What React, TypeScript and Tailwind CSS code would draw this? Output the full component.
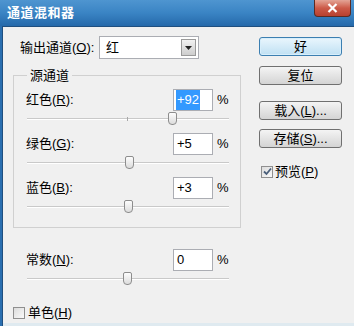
import React from "react";

const font = { fontFamily: '"Liberation Sans", "Noto Sans CJK SC", sans-serif' };

function Slider({ pos, tick }: { pos: number; tick?: boolean }) {
  return (
    <div className="relative h-[14px] ml-[13px] w-[202px]">
      <div className="absolute left-0 right-0 top-[6px] h-[2px] bg-[#c9c9c9] border-b border-white" />
      {tick && <div className="absolute left-[100px] top-[5px] h-[4px] w-px bg-[#a8a8a8]" />}
      <div
        className="absolute top-0 h-[13px] w-[9px] rounded-t-[2px] rounded-b-[4px] border border-[#8d8d8d] bg-gradient-to-b from-[#fdfdfd] to-[#dcdcdc]"
        style={{ left: pos - 4 }}
      />
    </div>
  );
}

function ValueRow({ label, value, selected }: { label: React.ReactNode; value: string; selected?: boolean }) {
  return (
    <div className="flex h-[22px] items-center">
      <div className="w-[159px] pl-[12px] text-[13px] text-black">{label}</div>
      <div className="flex h-[22px] w-[40px] items-center border border-[#abadb3] bg-white pl-[2px] text-[13px]">
        <span className={selected ? "bg-[#3399ff] px-px text-white" : "px-px text-black"}>{value}</span>
      </div>
      <span className="ml-[4px] text-[13px] text-black">%</span>
    </div>
  );
}

function Btn({ children, primary, className }: { children: React.ReactNode; primary?: boolean; className?: string }) {
  return (
    <div
      className={
        "flex h-[19px] w-[83px] items-center justify-center rounded-[3px] border text-[13px] text-black " +
        (primary
          ? "border-[#3c7fb1] bg-gradient-to-b from-[#eaf6fd] to-[#bfe0f3] shadow-[inset_0_0_0_1px_#d7eefb] "
          : "border-[#707070] bg-gradient-to-b from-[#f4f4f4] to-[#d4d4d4] ") +
        (className ?? "")
      }
    >
      {children}
    </div>
  );
}

function Box({ checked }: { checked?: boolean }) {
  return (
    <div className="flex h-[12px] w-[12px] items-center justify-center border border-[#8f8f8f] bg-gradient-to-br from-[#dcdcdc] to-[#fafafa]">
      {checked && (
        <svg width="9" height="9" viewBox="0 0 9 9">
          <path d="M1 4.5 L3.5 7 L8 1.5" stroke="#4a5f7a" strokeWidth="1.8" fill="none" />
        </svg>
      )}
    </div>
  );
}

export default function App() {
  return (
    <div className="flex h-[326px] w-[354px] flex-col overflow-hidden bg-[#2a6fb0]" style={font}>
      {/* Title bar */}
      <div className="relative flex h-[26px] shrink-0 items-center bg-gradient-to-b from-[#4e95d0] via-[#3a84c4] to-[#2569aa] pl-[7px]">
        <span className="text-[13px] font-bold tracking-[0.5px] text-white">通道混和器</span>
        <div className="absolute right-[3px] top-0 flex h-[17px] w-[37px] items-center justify-center rounded-b-[4px] border border-t-0 border-[#5c2a22] bg-gradient-to-b from-[#e3a496] via-[#cc5a48] to-[#b8402f]">
          <svg width="11" height="10" viewBox="0 0 11 10">
            <path d="M1.5 1 L9.5 9 M9.5 1 L1.5 9" stroke="white" strokeWidth="2.2" />
          </svg>
        </div>
      </div>

      {/* Body */}
      <div className="ml-[2px] flex flex-1 border-l border-t border-[#1f4f7f] bg-[#f0f0f0]">
        <div className="flex flex-1 flex-col">
          <div className="flex flex-1">
            {/* Left column */}
            <div className="flex w-[256px] flex-col">
              <div className="mt-[9px] flex h-[23px] items-center pl-[17px]">
                <span className="w-[79px] text-[13px] text-black">
                  输出通道(<u>O</u>):
                </span>
                <div className="flex h-[23px] w-[100px] items-center border border-[#abadb3] bg-white pl-[6px]">
                  <span className="flex-1 text-[13px] text-black">红</span>
                  <div className="mr-[2px] flex h-[17px] w-[15px] items-center justify-center border border-[#9a9a9a] bg-gradient-to-b from-[#f2f2f2] to-[#cdcdcd]">
                    <svg width="7" height="4" viewBox="0 0 7 4">
                      <path d="M0 0 H7 L3.5 4 Z" fill="#222" />
                    </svg>
                  </div>
                </div>
              </div>

              <div className="relative ml-[10px] mt-[16px] h-[153px] w-[228px] border border-[#d0d0d0] pt-[13px]">
                <span className="absolute -top-[10px] left-[13px] bg-[#f0f0f0] px-[3px] text-[13px] text-black">源通道</span>
                <ValueRow label={<>红色(<u>R</u>):</>} value="+92" selected />
                <div className="mt-px">
                  <Slider pos={145} tick />
                </div>
                <div className="mt-[7px]">
                  <ValueRow label={<>绿色(<u>G</u>):</>} value="+5" />
                </div>
                <div className="mt-px">
                  <Slider pos={102} />
                </div>
                <div className="mt-[7px]">
                  <ValueRow label={<>蓝色(<u>B</u>):</>} value="+3" />
                </div>
                <div className="mt-px">
                  <Slider pos={101} />
                </div>
              </div>

              <div className="ml-[11px] mt-[21px]">
                <ValueRow label={<>常数(<u>N</u>):</>} value="0" />
                <div className="mt-px">
                  <Slider pos={100} />
                </div>
              </div>

              <div className="ml-[10px] mt-[17px] flex items-center gap-[3px]">
                <Box />
                <span className="text-[13px] text-black">
                  单色(<u>H</u>)
                </span>
              </div>
            </div>

            {/* Right column */}
            <div className="flex flex-col">
              <Btn primary className="mt-[10px]">好</Btn>
              <Btn className="mt-[10px]">复位</Btn>
              <Btn className="mt-[16px]">
                载入(<u>L</u>)...
              </Btn>
              <Btn className="mt-[9px]">
                存储(<u>S</u>)...
              </Btn>
              <div className="ml-[2px] mt-[14px] flex items-center gap-[2px]">
                <Box checked />
                <span className="text-[13px] text-black">
                  预览(<u>P</u>)
                </span>
              </div>
            </div>
          </div>
          <div className="h-[3px] bg-[#dfeaf0]" />
          <div className="h-[2px] bg-[#26353d]" />
        </div>
      </div>
    </div>
  );
}
